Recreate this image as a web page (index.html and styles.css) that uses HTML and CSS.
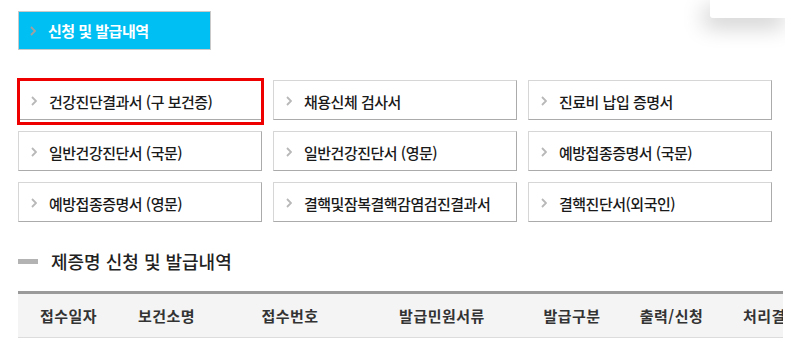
FILE: index.html
```html
<!DOCTYPE html>
<html lang="ko">

<head>
    <meta charset="UTF-8">
    <meta name="viewport" content="width=device-width, initial-scale=1.0">
    <title>제증명 신청 및 발급내역</title>
    <link rel="stylesheet" href="styles.css">
</head>

<body>
    <!-- floating box top right -->
    <div class="float-box"></div>

    <div class="wrap">
        <!-- Tab -->
        <div class="tab">
            <svg class="chev" width="6" height="10" viewBox="0 0 6 10"><polyline points="1,1 5,5 1,9" fill="none" stroke="#a0a0a0" stroke-width="1.8"/></svg>
            <span>신청 및 발급내역</span>
        </div>

        <!-- Certificate buttons -->
        <div class="cert-grid">
            <a href="#" class="cert-btn selected">
                <svg class="chev" width="6" height="10" viewBox="0 0 6 10"><polyline points="1,1 5,5 1,9" fill="none" stroke="#b8b8b8" stroke-width="1.8"/></svg>
                <span>건강진단결과서 (구 보건증)</span>
            </a>
            <a href="#" class="cert-btn">
                <svg class="chev" width="6" height="10" viewBox="0 0 6 10"><polyline points="1,1 5,5 1,9" fill="none" stroke="#b8b8b8" stroke-width="1.8"/></svg>
                <span>채용신체 검사서</span>
            </a>
            <a href="#" class="cert-btn">
                <svg class="chev" width="6" height="10" viewBox="0 0 6 10"><polyline points="1,1 5,5 1,9" fill="none" stroke="#b8b8b8" stroke-width="1.8"/></svg>
                <span>진료비 납입 증명서</span>
            </a>
            <a href="#" class="cert-btn">
                <svg class="chev" width="6" height="10" viewBox="0 0 6 10"><polyline points="1,1 5,5 1,9" fill="none" stroke="#b8b8b8" stroke-width="1.8"/></svg>
                <span>일반건강진단서 (국문)</span>
            </a>
            <a href="#" class="cert-btn">
                <svg class="chev" width="6" height="10" viewBox="0 0 6 10"><polyline points="1,1 5,5 1,9" fill="none" stroke="#b8b8b8" stroke-width="1.8"/></svg>
                <span>일반건강진단서 (영문)</span>
            </a>
            <a href="#" class="cert-btn">
                <svg class="chev" width="6" height="10" viewBox="0 0 6 10"><polyline points="1,1 5,5 1,9" fill="none" stroke="#b8b8b8" stroke-width="1.8"/></svg>
                <span>예방접종증명서 (국문)</span>
            </a>
            <a href="#" class="cert-btn">
                <svg class="chev" width="6" height="10" viewBox="0 0 6 10"><polyline points="1,1 5,5 1,9" fill="none" stroke="#b8b8b8" stroke-width="1.8"/></svg>
                <span>예방접종증명서 (영문)</span>
            </a>
            <a href="#" class="cert-btn">
                <svg class="chev" width="6" height="10" viewBox="0 0 6 10"><polyline points="1,1 5,5 1,9" fill="none" stroke="#b8b8b8" stroke-width="1.8"/></svg>
                <span>결핵및잠복결핵감염검진결과서</span>
            </a>
            <a href="#" class="cert-btn">
                <svg class="chev" width="6" height="10" viewBox="0 0 6 10"><polyline points="1,1 5,5 1,9" fill="none" stroke="#b8b8b8" stroke-width="1.8"/></svg>
                <span>결핵진단서(외국인)</span>
            </a>
        </div>

        <!-- History -->
        <h2 class="sec-title">제증명 신청 및 발급내역</h2>

        <div class="table-wrap">
            <table class="history">
                <thead>
                    <tr>
                        <th class="c1">접수일자</th>
                        <th class="c2">보건소명</th>
                        <th class="c3">접수번호</th>
                        <th class="c4">발급민원서류</th>
                        <th class="c5">발급구분</th>
                        <th class="c6">출력/신청</th>
                        <th class="c7">처리결과</th>
                    </tr>
                </thead>
            </table>
        </div>
    </div>
</body>

</html>
```

FILE: styles.css
```css
/* Base */
body, html {
    margin: 0;
    padding: 0;
    font-family: 'Noto Sans CJK KR', 'Noto Sans', sans-serif;
    background-color: #fff;
    color: #222;
}

.wrap {
    width: 765px;
    padding: 11px 0 0 18px;
    overflow: hidden;
}

.float-box {
    position: absolute;
    top: 0;
    left: 710px;
    width: 80px;
    height: 18px;
    background: #fff;
    border-bottom-left-radius: 3px;
    box-shadow: -6px 8px 22px rgba(0, 0, 0, 0.22);
}

/* Tab */
.tab {
    width: 180px;
    height: 37px;
    background-color: #00bff3;
    border: 1px solid #c9c9c9;
    display: flex;
    align-items: center;
    padding-left: 11px;
    color: #fff;
    font-weight: bold;
    font-size: 15px;
    letter-spacing: -0.5px;
}

.tab .chev {
    margin-right: 12px;
}

/* Certificate grid */
.cert-grid {
    margin-top: 30px;
    width: 754px;
    display: grid;
    grid-template-columns: repeat(3, 244px);
    grid-auto-rows: 40px;
    column-gap: 11px;
    row-gap: 11px;
}

.cert-btn {
    position: relative;
    display: flex;
    align-items: center;
    padding: 2px 0 0 12px;
    border: 1px solid #d6d6d6;
    border-right-color: #ababab;
    border-bottom-color: #ababab;
    color: #1a1a1a;
    text-decoration: none;
    font-size: 15px;
    font-weight: 500;
    letter-spacing: -0.5px;
}

.cert-btn .chev {
    margin-right: 12px;
}

.cert-btn.selected::after {
    content: '';
    position: absolute;
    left: -2px;
    top: -3px;
    right: -3px;
    bottom: -6px;
    border: 3px solid #ee0000;
}

/* Section title */
.sec-title {
    margin: 27px 0 0 0;
    display: flex;
    align-items: center;
    font-size: 18px;
    font-weight: 500;
    line-height: 24px;
    color: #222;
}

.sec-title::before {
    content: '';
    display: inline-block;
    width: 20px;
    height: 5px;
    background-color: #b3b3b3;
    margin-right: 13px;
}

/* Table */
.table-wrap {
    margin-top: 18px;
    width: 765px;
    overflow: hidden;
}

.history {
    border-collapse: collapse;
    table-layout: fixed;
    width: 808px;
    border-top: 3px solid #9a9a9a;
}

.history th {
    height: 43px;
    padding: 0;
    background-color: #f4f4f4;
    border-bottom: 1px solid #dcdcdc;
    font-size: 15px;
    font-weight: bold;
    letter-spacing: 0.5px;
    color: #333;
    text-align: center;
}

.c1 { width: 101px; }
.c2 { width: 95px; }
.c3 { width: 152px; }
.c4 { width: 152px; }
.c5 { width: 108px; }
.c6 { width: 91px; }
.c7 { width: 109px; }
```
